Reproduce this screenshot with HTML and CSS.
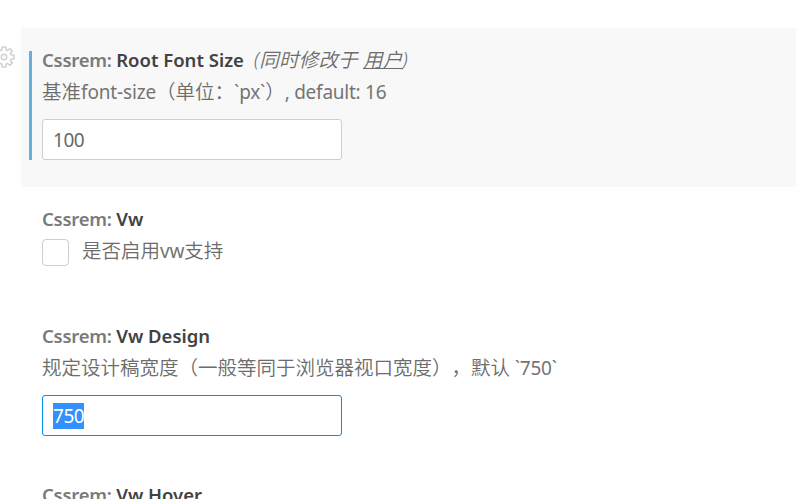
FILE: index.html
```html
<!DOCTYPE html>
<html lang="zh-CN">
<head>
<meta charset="utf-8">
<title>Settings</title>
<link rel="stylesheet" href="styles.css">
</head>
<body>
<main class="settings">
  <section class="row">
    <div class="gutter">
      <svg class="gear" viewBox="0 0 22 22" fill="none" stroke="#d2d2d2" stroke-width="1.6" stroke-linejoin="round"><path d="M9.2 1h3.6l.5 3.1 1.2.5L17 2.7 19.3 5l-1.9 2.5.5 1.2 3.1.5v3.6l-3.1.5-.5 1.2 1.9 2.5L17 19.3l-2.5-1.9-1.2.5-.5 3.1H9.2l-.5-3.1-1.2-.5L5 19.3 2.7 17l1.9-2.5-.5-1.2L1 12.8V9.2l3.1-.5.5-1.2L2.7 5 5 2.7l2.5 1.9 1.2-.5z"/><circle cx="11" cy="11" r="2.7"/></svg>
    </div>
    <div class="item focused">
      <div class="modified">
        <h3 class="title"><span class="category">Cssrem: </span><span class="name">Root Font Size</span><em class="scope">(同时修改于 <u>用户</u>)</em></h3>
        <p class="desc">基准<span class="latin wide">font-size</span>（单位：<span class="latin">`px`</span>）<span class="latin">, default: 16</span></p>
        <div class="field"><span>100</span></div>
      </div>
    </div>
  </section>
  <section class="row">
    <div class="gutter"></div>
    <div class="item">
      <h3 class="title"><span class="category">Cssrem: </span><span class="name">Vw</span></h3>
      <div class="check"><span class="box"></span><p class="desc">是否启用<span class="latin wide">vw</span>支持</p></div>
    </div>
  </section>
  <section class="row">
    <div class="gutter"></div>
    <div class="item">
      <h3 class="title"><span class="category">Cssrem: </span><span class="name">Vw Design</span></h3>
      <p class="desc">规定设计稿宽度（一般等同于浏览器视口宽度），默认<span class="latin"> `750`</span></p>
      <div class="field active"><span class="selected">750</span></div>
    </div>
  </section>
  <section class="row">
    <div class="gutter"></div>
    <div class="item last">
      <h3 class="title"><span class="category">Cssrem: </span><span class="name">Vw Hover</span></h3>
    </div>
  </section>
</main>
</body>
</html>
```
FILE: styles.css
```css
* { box-sizing: border-box; }
body {
  margin: 0;
  background: #fff;
  color: #6c6c6c;
  font-family: "Noto Sans", "Noto Sans CJK SC", sans-serif;
  text-spacing-trim: space-all;
}
.settings { height: 499px; padding-top: 28px; overflow: hidden; }
.row { display: flex; }
.gutter { flex: 0 0 21px; padding-top: 18px; }
.gear { display: block; width: 22px; height: 22px; margin-left: -7px; }
.item { flex: 1; padding: 16px 21px 27px; }
.item.last { padding-bottom: 0; }
.focused { background: #f8f8f8; padding: 23px 8px 27px; }
.modified { display: flex; flex-direction: column; padding-left: 10px; border-left: 3px solid #66afe0; }
.modified .title { margin-top: -7px; }
.title, .desc { margin: 0; height: 32px; line-height: 32px; white-space: pre; }
.title { font-size: 18.5px; font-weight: 600; letter-spacing: -0.25px; }
.category { color: #7a7a7a; }
.name { color: #424242; letter-spacing: 0; }
.scope { margin-left: 10px; font: italic 350 19.5px/30px "Noto Sans", "Noto Sans CJK SC", sans-serif; letter-spacing: 0.2px; }
.scope u { text-decoration-thickness: 1px; text-underline-offset: 1px; }
.desc { position: relative; top: -1px; font: 350 19.5px/32px "Noto Sans CJK SC", sans-serif; }
.latin { color: #747474; font: 400 19px/32px "Noto Sans", sans-serif; letter-spacing: -0.25px; }
.wide { letter-spacing: -0.15px; }
.field {
  display: flex;
  align-items: center;
  width: 300px;
  height: 41px;
  margin-top: 11px;
  padding-left: 10px;
  border: 1px solid #cecece;
  border-radius: 3px;
  background: #fff;
  color: #696969;
  font-size: 19px;
  letter-spacing: -0.45px;
}
.active { border-color: #0090f1; }
.selected { height: 26px; line-height: 26px; background: #3390ff; color: #fff; }
.check { display: flex; height: 42px; }
.box { width: 27px; height: 27px; margin: 4px 13px 0 0; border: 1px solid #cecece; border-radius: 4px; }
```
